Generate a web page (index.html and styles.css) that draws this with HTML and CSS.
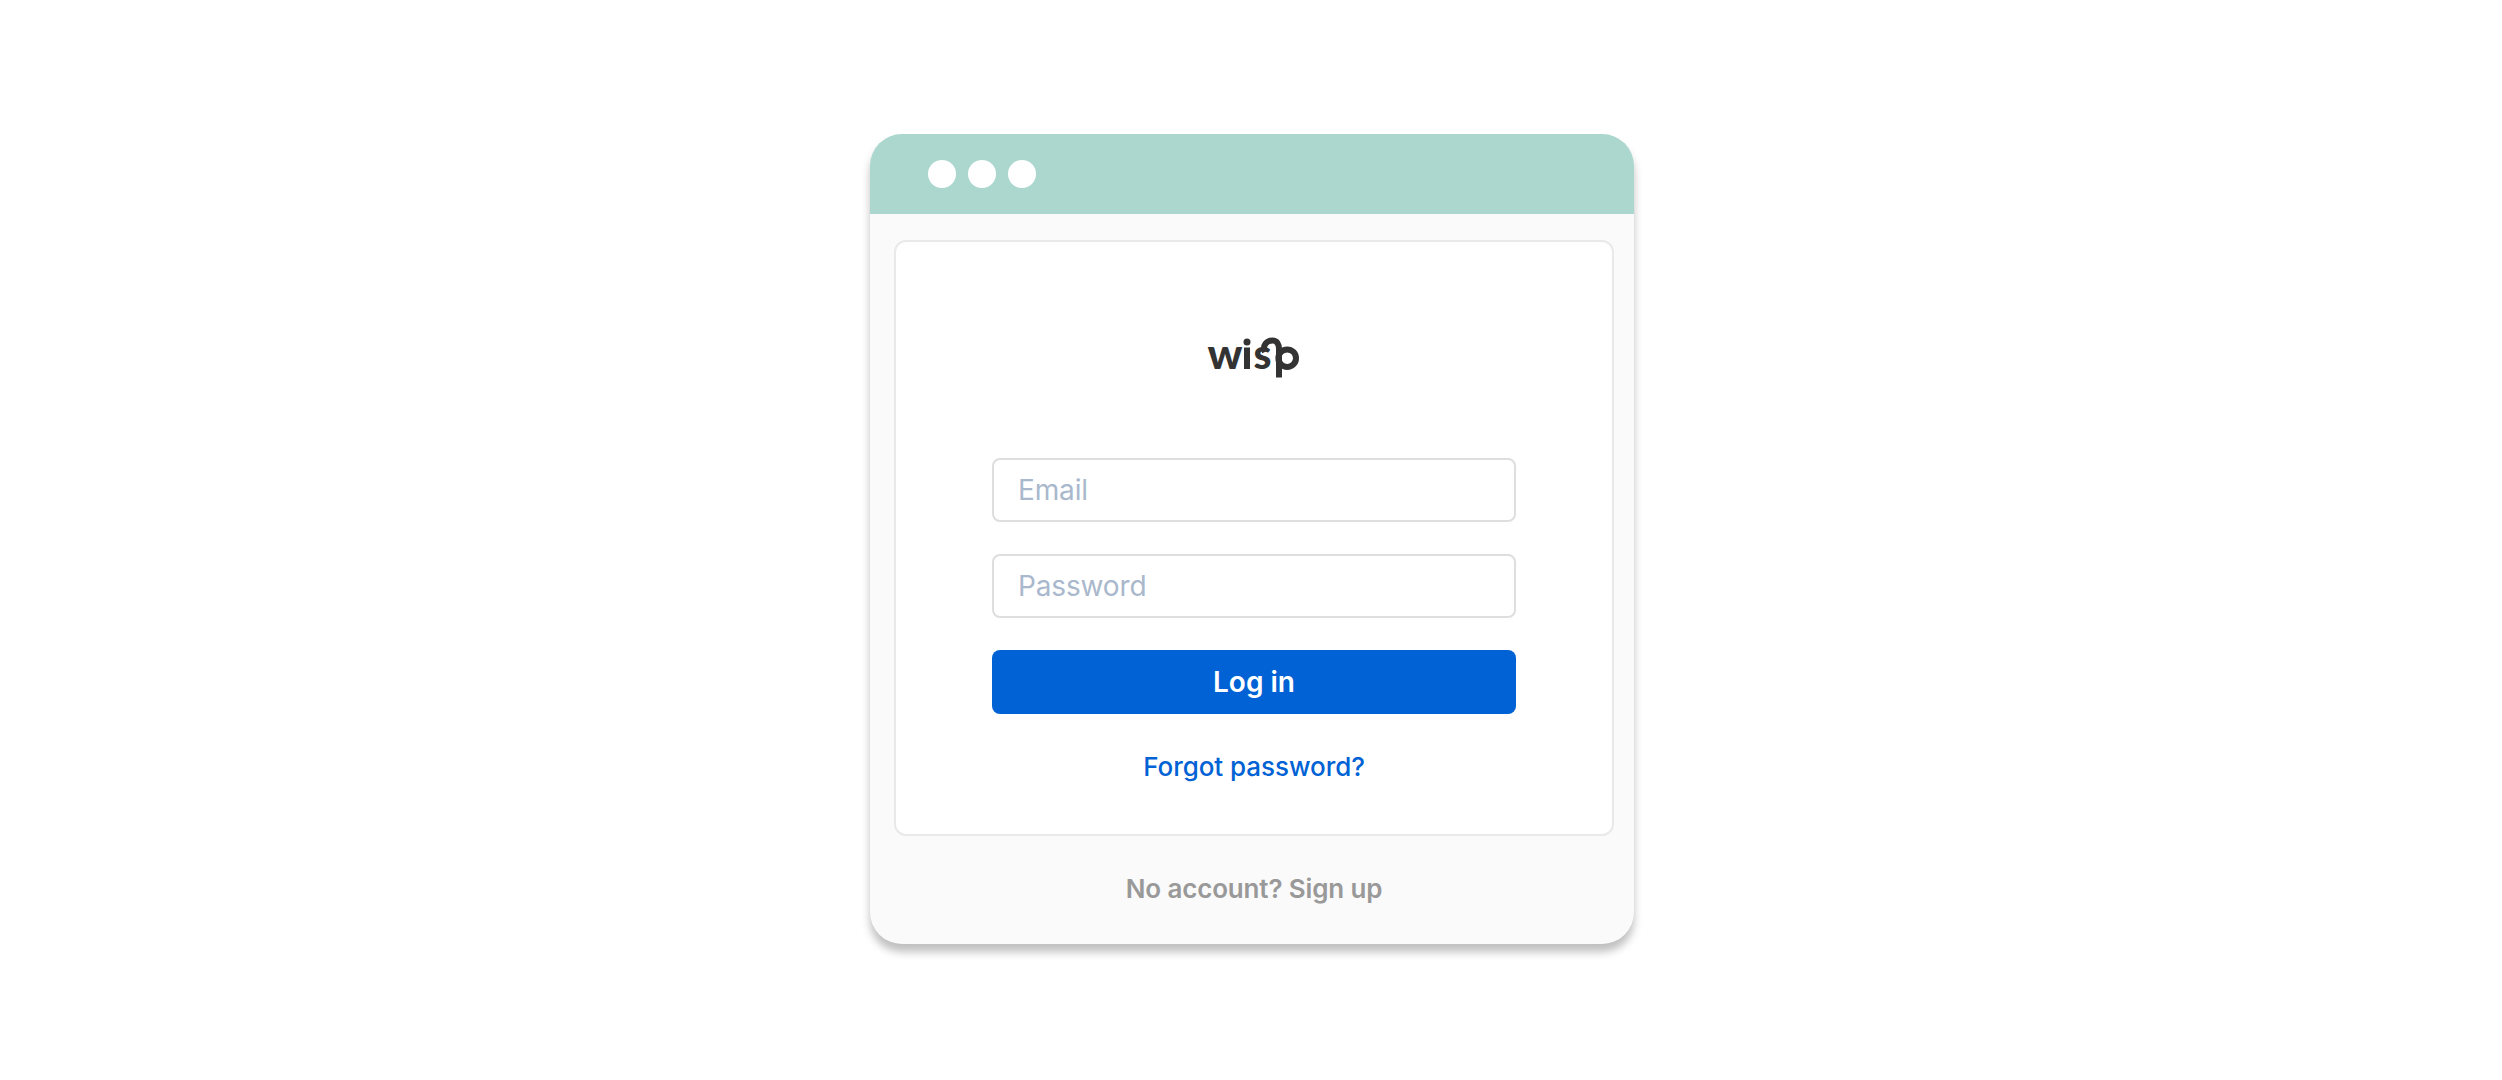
FILE: index.html
```html
<!doctype html>
<html lang="en">
<head>
<meta charset="utf-8">
<title>wisp - Log in</title>
<link rel="stylesheet" href="styles.css">
</head>

<body>
<div class="window">
	<div class="bar">
		<span class="dot"></span>
		<span class="dot"></span>
		<span class="dot"></span>
	</div>
	<div class="content">
		<form class="card">
			<svg class="logo" width="104" height="52" viewBox="0 0 104 52" role="img" aria-label="wisp">
				<text x="5.5" y="39" textLength="35" lengthAdjust="spacingAndGlyphs">w</text>
				<circle cx="45" cy="12" r="3.5"/>
				<path d="M45 17.5V39"/>
				<text x="51.5" y="39" textLength="18" lengthAdjust="spacingAndGlyphs">s</text>
				<path d="M63 22C60 15 65 10.5 70.5 10.5C75 10.5 77 14 77 19V47.5"/>
				<circle class="bowl" cx="85.2" cy="28.2" r="8.8"/>
			</svg>
			<input class="field" type="text" placeholder="Email">
			<input class="field" type="password" placeholder="Password">
			<button class="login" type="button">Log in</button>
			<a class="forgot" href="#">Forgot password?</a>
		</form>
		<a class="signup" href="#">No account? Sign up</a>
	</div>
</div>
</body>
</html>
```

FILE: styles.css
```css
*{margin: 0; padding: 0; box-sizing: border-box;}
body {
	display: flex;
	align-items: flex-start;
	justify-content: center;
	min-height: 1080px;
	padding: 134px 0 0 2px;
	background: #fff;
	font-family: Inter, "Liberation Sans", sans-serif;
}
a { text-decoration: none;}
.window {
	width: 764px;
	height: 810px;
	border-radius: 32px;
	background: #fafafa;
	box-shadow: 0 8px 8px rgba(0,0,0,.25);
}
.bar {
	display: flex;
	align-items: center;
	gap: 12px;
	height: 80px;
	padding-left: 58px;
	border-radius: 32px 32px 0 0;
	background: #acd7ce;
}
.dot {
	width: 28px;
	height: 28px;
	border-radius: 50%;
	background: #fff;
}
.content {
	display: flex;
	flex-direction: column;
	padding: 26px 20px 0 24px;
}
.card {
	display: flex;
	flex-direction: column;
	height: 596px;
	padding: 88px 96px 0;
	border: 2px solid #e9e9e9;
	border-radius: 12px;
	background: #fff;
}
.logo {
	display: block;
	margin: 0 auto 76px;
	fill: #333;
	overflow: visible;
}
.logo text {
	font: 900 42px Lato, sans-serif;
}
.logo path, .logo .bowl {
	fill: none;
	stroke: #333;
	stroke-width: 6;
}
.field {
	height: 64px;
	margin-bottom: 32px;
	padding: 0 24px;
	border: 2px solid #dedede;
	border-radius: 8px;
	background: #fff;
	font: 400 28px Inter, sans-serif;
	letter-spacing: -.15px;
}
.field::placeholder {
	color: #a9b8cc;
	opacity: 1;
}
.login {
	height: 64px;
	border: 0;
	border-radius: 8px;
	background: #0062d4;
	color: #fff;
	font: 600 28px Inter, sans-serif;
}
.forgot, .signup {
	font-size: 26px;
	line-height: 32px;
	text-align: center;
}
.forgot {
	margin-top: 37px;
	color: #0062d4;
	font-weight: 550;
	letter-spacing: -.05px;
}
.signup {
	margin-top: 37px;
	color: #999;
	font-weight: 600;
	letter-spacing: -.15px;
}
```
